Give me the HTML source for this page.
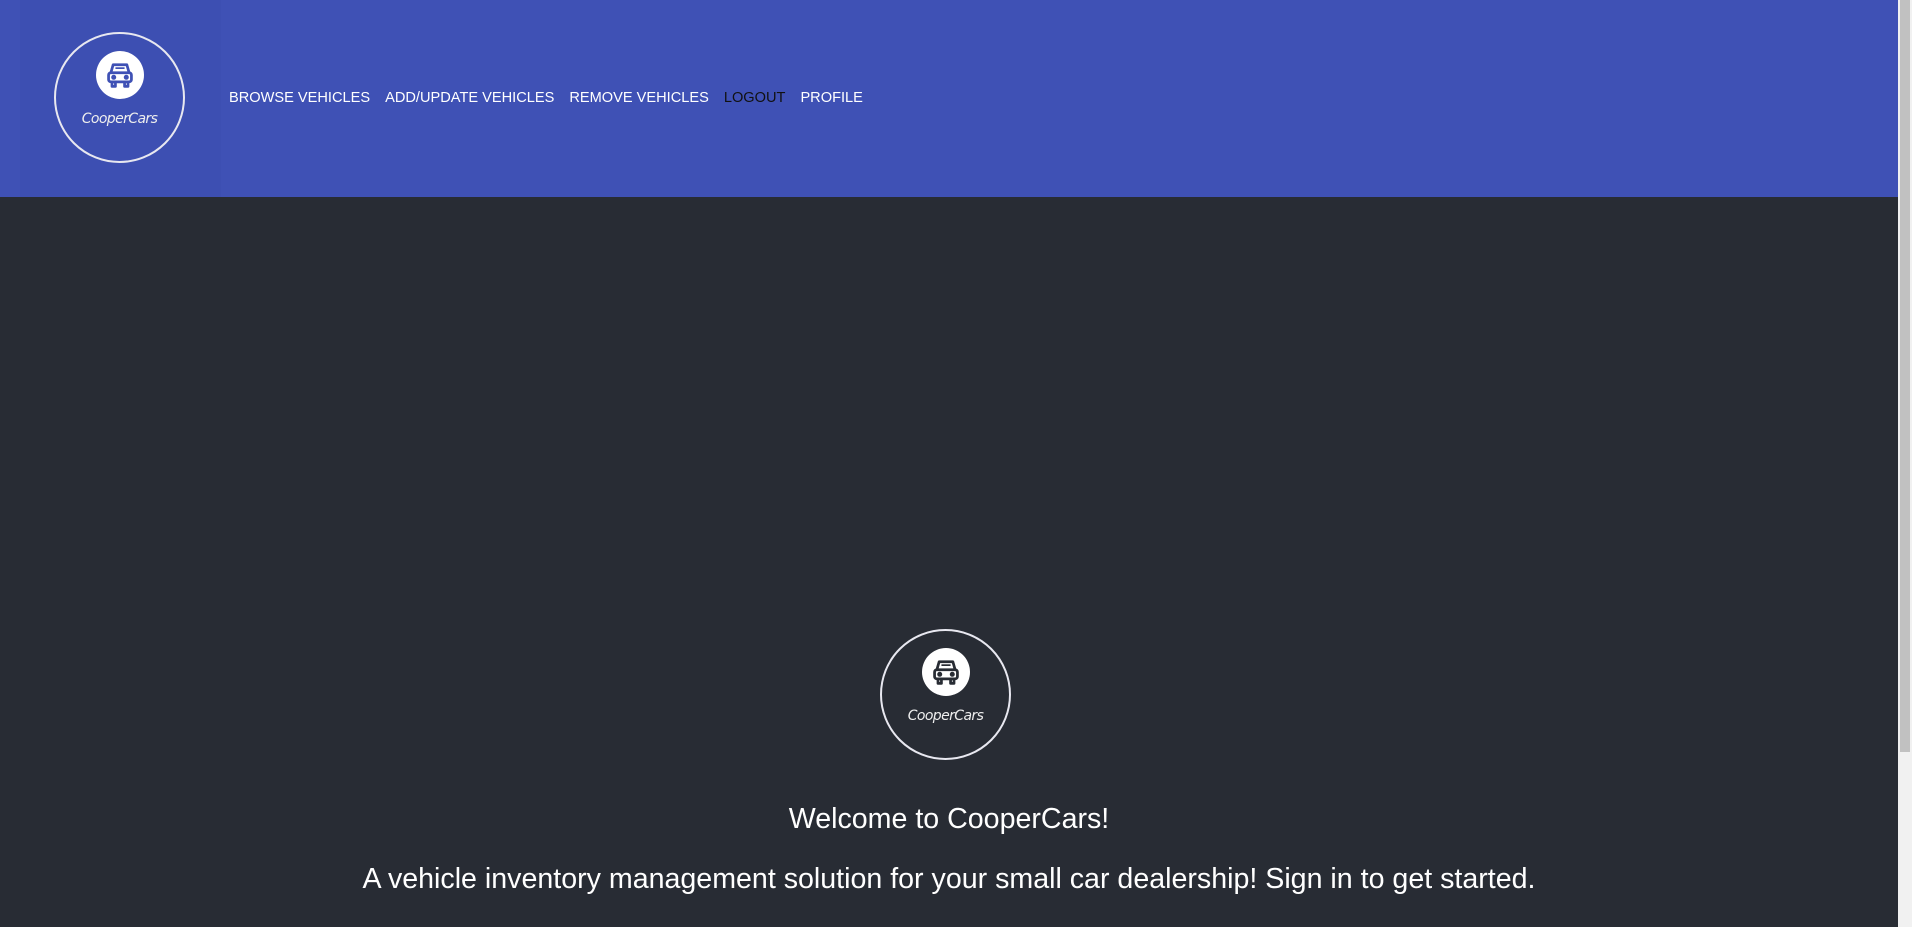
<!DOCTYPE html>
<html><head><meta charset="utf-8"><style>
html,body{margin:0;padding:0;width:1912px;height:927px;overflow:hidden;background:#282c34;font-family:"Liberation Sans",sans-serif;}
.hdr{position:absolute;left:0;top:0;width:1898px;height:197px;background:#3f51b5;}
.lp{position:absolute;left:20px;top:0;width:201px;height:197px;background:#3d4fb2;}
.logo{position:absolute;width:131px;height:131px;border:2px solid #e8e8f0;border-radius:50%;box-sizing:border-box;}
.ic{position:absolute;width:48px;height:48px;border-radius:50%;background:#fff;left:50%;margin-left:-24px;top:17px;}
.ic svg{position:absolute;left:8px;top:8px;}
.lt{position:absolute;left:0;right:0;text-align:center;font-style:italic;font-size:14px;color:#eee;top:77px;font-family:"DejaVu Sans","Liberation Sans",sans-serif;letter-spacing:-0.6px}
.nav{position:absolute;left:229px;top:90px;font-size:14.6px;color:#fff;white-space:nowrap;}
.nav span{margin-right:15px;}
.t{position:absolute;left:0;width:1898px;text-align:center;color:#fff;font-size:28.6px;}
.sb{position:absolute;right:0;top:0;width:14px;height:927px;background:#f1f1f1;}
.th{position:absolute;left:2px;right:2px;top:0;height:752px;background:#c1c1c1;}
</style></head><body>
<div class="hdr">
 <div class="lp"></div>
 <div class="logo" style="left:54px;top:32px;">
  <div class="ic"><svg width="32" height="32" viewBox="0 0 28 28" fill="none" stroke="#3f51b5" stroke-width="2.4" stroke-linejoin="round"><path d="M6 12 L8 5 H20 L22 12"/><rect x="4" y="12" width="20" height="8" rx="2"/><path d="M7 20 v4 h3 v-4 M18 20 v4 h3 v-4"/><path d="M10 8 h8" stroke-width="1.5"/><circle cx="8.5" cy="16" r="1" fill="#3f51b5"/><circle cx="19.5" cy="16" r="1" fill="#3f51b5"/></svg></div>
  <div class="lt">CooperCars</div>
 </div>
 <div class="nav"><span>BROWSE VEHICLES</span><span>ADD/UPDATE VEHICLES</span><span>REMOVE VEHICLES</span><span style="color:#111">LOGOUT</span><span>PROFILE</span></div>
</div>
<div class="logo" style="left:880px;top:629px;">
  <div class="ic"><svg width="32" height="32" viewBox="0 0 28 28" fill="none" stroke="#282c34" stroke-width="2.4" stroke-linejoin="round"><path d="M6 12 L8 5 H20 L22 12"/><rect x="4" y="12" width="20" height="8" rx="2"/><path d="M7 20 v4 h3 v-4 M18 20 v4 h3 v-4"/><path d="M10 8 h8" stroke-width="1.5"/><circle cx="8.5" cy="16" r="1" fill="#282c34"/><circle cx="19.5" cy="16" r="1" fill="#282c34"/></svg></div>
  <div class="lt">CooperCars</div>
</div>
<div class="t" style="top:803px;">Welcome to CooperCars!</div>
<div class="t" style="top:863px;">A vehicle inventory management solution for your small car dealership! Sign in to get started.</div>
<div class="sb"><div class="th"></div></div>
</body></html>
